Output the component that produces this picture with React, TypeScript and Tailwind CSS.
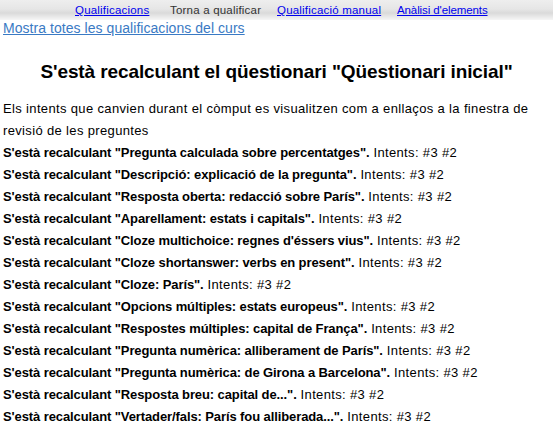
import React from "react";

const rows = [
  "Pregunta calculada sobre percentatges",
  "Descripció: explicació de la pregunta",
  "Resposta oberta: redacció sobre París",
  "Aparellament: estats i capitals",
  "Cloze multichoice: regnes d'éssers vius",
  "Cloze shortanswer: verbs en present",
  "Cloze: París",
  "Opcions múltiples: estats europeus",
  "Respostes múltiples: capital de França",
  "Pregunta numèrica: alliberament de París",
  "Pregunta numèrica: de Girona a Barcelona",
  "Resposta breu: capital de...",
  "Vertader/fals: París fou alliberada...",
];

export default function App() {
  return (
    <div className="w-[553px] h-[430px] overflow-hidden bg-white text-black" style={{ fontFamily: '"Liberation Sans", Arial, sans-serif' }}>
      <div className="h-[20px] bg-[linear-gradient(to_bottom,#eeeeee_0%,#e6e6e6_45%,#dadada_65%,#f6f6f6_100%)] flex items-center pt-[2px] text-[11.5px] tracking-[0.2px]">
        <div className="flex items-center pl-[75px]">
          <a href="#" className="w-[95px] text-[#0000ee] underline">Qualificacions</a>
          <span className="w-[107px] text-[#333]">Torna a qualificar</span>
          <a href="#" className="w-[120px] text-[#0000ee] underline">Qualificació manual</a>
          <a href="#" className="text-[#0000ee] underline tracking-[-0.1px]">Anàlisi d'elements</a>
        </div>
      </div>
      <div className="px-[3px] leading-[16px]">
        <a href="#" className="text-[14px] text-[#3a7ac4] underline tracking-[0.05px]">Mostra totes les qualificacions del curs</a>
      </div>
      <h2 className="text-center font-bold text-[19px] leading-[24px] mt-[24px] mb-[14px] tracking-[-0.1px]">S'està recalculant el qüestionari "Qüestionari inicial"</h2>
      <div className="px-[3px] text-[13px] leading-[22px] tracking-[0.35px]">
        <p>Els intents que canvien durant el còmput es visualitzen com a enllaços a la finestra de revisió de les preguntes</p>
        {rows.map((r) => (
          <div key={r}>
            <b className="tracking-[-0.1px]">S'està recalculant "{r}".</b> Intents: #3 #2
          </div>
        ))}
      </div>
    </div>
  );
}
